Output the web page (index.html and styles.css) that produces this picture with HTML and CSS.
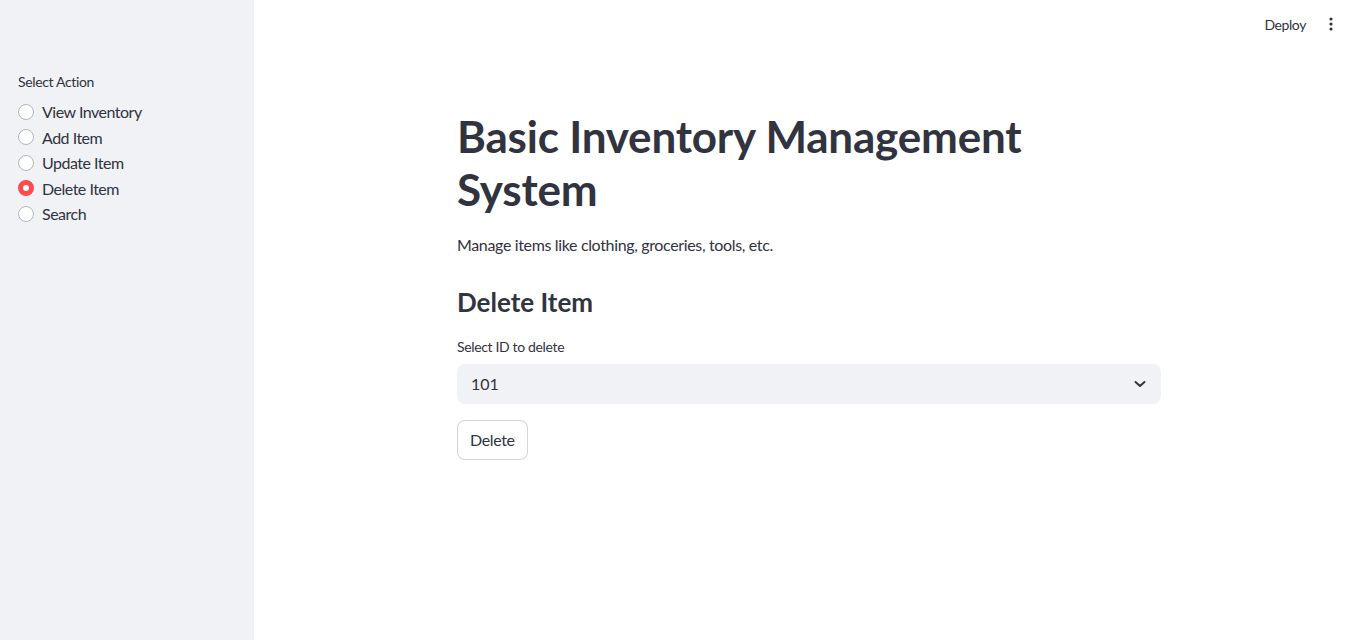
FILE: index.html
```html
<!DOCTYPE html>
<html>
<head>
<meta charset="utf-8">
<title>Basic Inventory Management System</title>
<link rel="stylesheet" href="styles.css">
</head>
<body>
<div class="app">
  <aside class="sidebar">
    <div class="widget-label">Select Action</div>
    <div class="radio-group">
      <label class="radio"><span class="dot"></span><span>View Inventory</span></label>
      <label class="radio"><span class="dot"></span><span>Add Item</span></label>
      <label class="radio"><span class="dot"></span><span>Update Item</span></label>
      <label class="radio checked"><span class="dot"></span><span>Delete Item</span></label>
      <label class="radio"><span class="dot"></span><span>Search</span></label>
    </div>
  </aside>
  <main class="main">
    <header class="topbar">
      <span class="deploy">Deploy</span>
      <span class="kebab">
        <svg width="16" height="16" viewBox="0 0 16 16"><circle cx="8" cy="3" r="1.6" fill="#31333f"/><circle cx="8" cy="8" r="1.6" fill="#31333f"/><circle cx="8" cy="13" r="1.6" fill="#31333f"/></svg>
      </span>
    </header>
    <section class="content">
      <h1 class="title">Basic Inventory Management System</h1>
      <p class="lead">Manage items like clothing, groceries, tools, etc.</p>
      <h3 class="subheader">Delete Item</h3>
      <div class="widget-label">Select ID to delete</div>
      <div class="select">
        <span>101</span>
        <svg width="16" height="16" viewBox="0 0 16 16"><path d="M3.5 6l4.5 4 4.5-4" fill="none" stroke="#31333f" stroke-width="2" stroke-linecap="round" stroke-linejoin="round"/></svg>
      </div>
      <div class="btn-row"><button class="btn">Delete</button></div>
    </section>
  </main>
</div>
</body>
</html>
```
FILE: styles.css
```css
* { box-sizing: border-box; }
html, body { margin: 0; padding: 0; }
body {
  font-family: Lato, "Source Sans Pro", "Noto Sans", sans-serif;
  color: #31333f;
  background: #ffffff;
}
.app {
  display: flex;
  min-height: 640px;
}
.sidebar {
  width: 254px;
  flex: 0 0 254px;
  background: #f0f2f6;
  padding: 73px 18px 0 18px;
}
.widget-label {
  font-size: 14px;
  line-height: 18px;
  letter-spacing: -0.35px;
  margin-bottom: 8px;
}
.radio-group {
  display: flex;
  flex-direction: column;
}
.radio {
  display: flex;
  align-items: center;
  gap: 8px;
  height: 25.5px;
  font-size: 16px;
  letter-spacing: -0.5px;
}
.dot {
  width: 16px;
  height: 16px;
  border-radius: 50%;
  border: 1px solid #b2b5bd;
  background: #ffffff;
  flex: 0 0 16px;
}
.radio.checked .dot {
  border: 5px solid #ff4b4b;
  background: #ffffff;
}
.main {
  flex: 1;
  display: flex;
  flex-direction: column;
  padding-left: 2px;
}
.topbar {
  height: 48px;
  display: flex;
  justify-content: flex-end;
  align-items: center;
  gap: 17px;
  padding-right: 23px;
}
.deploy {
  font-size: 14px;
  letter-spacing: -0.4px;
}
.kebab { display: flex; }
.content {
  width: 704px;
  margin: 0 auto;
  padding-top: 62px;
}
.title {
  margin: 0;
  font-size: 44px;
  line-height: 52.8px;
  font-weight: 700;
  letter-spacing: -0.2px;
  width: 600px;
}
.lead {
  margin: 16px 0 0 0;
  font-size: 16px;
  line-height: 25.6px;
  letter-spacing: -0.35px;
}
.subheader {
  margin: 27px 0 0 0;
  font-size: 26px;
  line-height: 36px;
  font-weight: 700;
}
.content .widget-label {
  margin-top: 18px;
  margin-bottom: 8px;
}
.select {
  height: 40px;
  background: #f0f2f6;
  border-radius: 8px;
  display: flex;
  align-items: center;
  justify-content: space-between;
  padding: 0 13px 2px 14px;
  font-size: 16px;
}
.select svg { margin-top: 2px; }
.btn-row { margin-top: 16px; }
.btn {
  height: 40px;
  padding: 0 12px 2px 12px;
  font-family: inherit;
  font-size: 16px;
  letter-spacing: -0.35px;
  color: #31333f;
  background: #ffffff;
  border: 1px solid rgba(49, 51, 63, 0.2);
  border-radius: 8px;
}
```
